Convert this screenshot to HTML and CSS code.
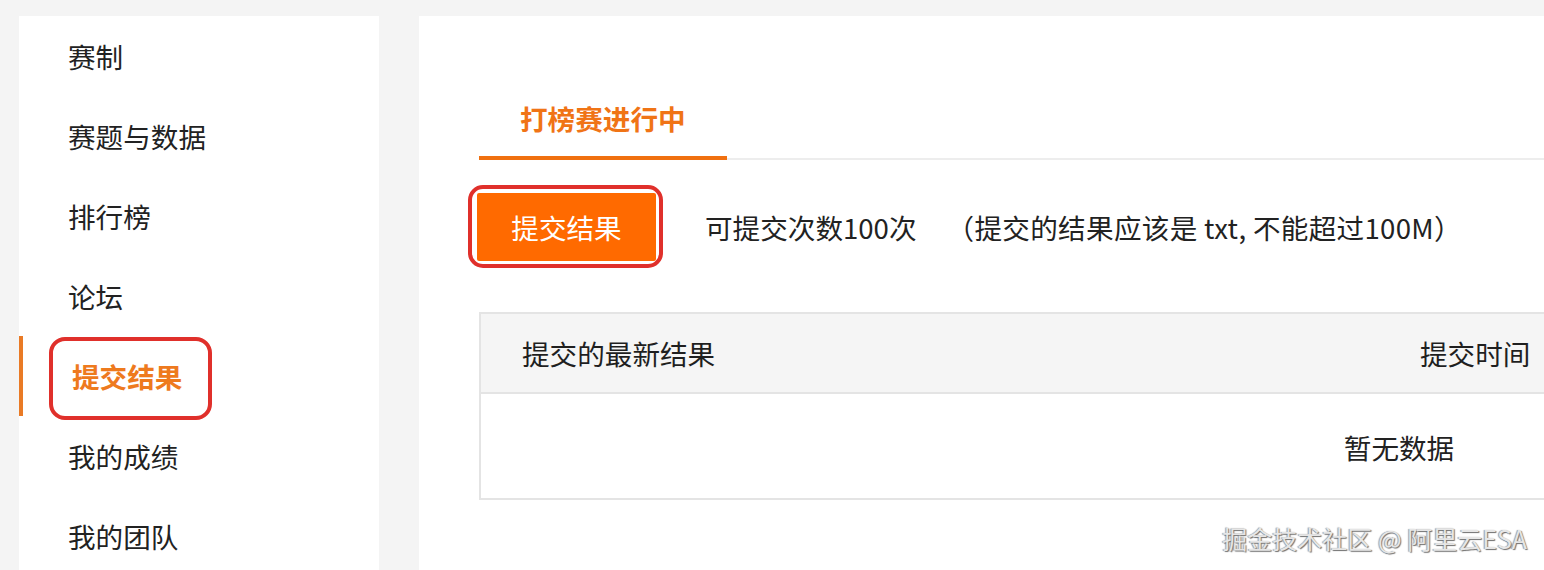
FILE: index.html
```html
<!DOCTYPE html>
<html lang="zh-CN">
<head>
<meta charset="utf-8">
<title>提交结果</title>
<link rel="stylesheet" href="styles.css">
</head>
<body>
<div class="page">
  <aside class="sidebar">
    <div class="nav-item">赛制</div>
    <div class="nav-item">赛题与数据</div>
    <div class="nav-item">排行榜</div>
    <div class="nav-item">论坛</div>
    <div class="nav-item active">提交结果<span class="mark mark-nav"></span></div>
    <div class="nav-item">我的成绩</div>
    <div class="nav-item">我的团队</div>
  </aside>
  <main class="main">
    <div class="tabs">
      <div class="tab active">打榜赛进行中</div>
    </div>
    <div class="actions">
      <div class="btn-wrap">
        <button class="btn">提交结果</button>
        <span class="mark mark-btn"></span>
      </div>
      <span class="count">可提交次数100次</span>
      <span class="hint">（提交的结果应该是 txt, 不能超过100M）</span>
    </div>
    <div class="table">
      <div class="thead">
        <div class="th th-result">提交的最新结果</div>
        <div class="th th-time">提交时间</div>
      </div>
      <div class="tbody">
        <div class="empty">暂无数据</div>
      </div>
    </div>
  </main>
</div>
<div class="watermark">掘金技术社区 @ 阿里云ESA</div>
</body>
</html>
```

FILE: styles.css
```css
* { box-sizing: border-box; }
html, body {
  margin: 0;
  height: 100%;
  overflow: hidden;
}
body {
  background: #f4f4f4;
  font-family: "Noto Sans CJK SC", "Noto Sans", sans-serif;
  color: #1f1f1f;
  position: relative;
}
.page {
  display: flex;
  gap: 40px;
  padding: 16px 0 0 19px;
  height: 100%;
}
.sidebar {
  width: 360px;
  flex: none;
  background: #fff;
}
.nav-item {
  position: relative;
  height: 80px;
  line-height: 80px;
  padding-left: 49px;
  font-size: 27.6px;
  color: #222;
}
.nav-item.active {
  color: #ee7a1e;
  font-weight: 700;
  border-left: 4px solid #e97a25;
  padding-left: 49px;
}
.mark {
  position: absolute;
  border: 4px solid #e0302b;
  pointer-events: none;
}
.mark-nav {
  left: 26px;
  top: 1px;
  width: 163px;
  height: 83px;
  border-radius: 16px;
}
.main {
  flex: 1;
  background: #fff;
  padding: 82px 0 0 60px;
  margin-right: -40px;
  overflow: hidden;
  min-width: 0;
}
.tabs {
  display: flex;
  border-bottom: 2px solid #ededed;
}
.tab {
  font-size: 27.6px;
  line-height: 40px;
  padding: 0 41px 18px 41px;
  margin-bottom: -2px;
  border-bottom: 4px solid #f07010;
  color: #f07416;
  font-weight: 700;
}
.actions {
  display: flex;
  align-items: center;
  margin-top: 33px;
  font-size: 27.6px;
}
.btn-wrap {
  position: relative;
  margin-left: -2px;
}
.btn {
  display: block;
  width: 179px;
  height: 68px;
  border: none;
  border-radius: 2px;
  background: #ff6a00;
  color: #fff;
  font-family: inherit;
  font-size: 27.6px;
  padding: 0;
}
.mark-btn {
  left: -9px;
  top: -8px;
  width: 195px;
  height: 83px;
  border-radius: 15px;
}
.count {
  margin-left: 49px;
  color: #222;
}
.hint {
  margin-left: 30px;
  color: #222;
  letter-spacing: 0.3px;
}
.table {
  margin-top: 51px;
  width: 1840px;
  border: 2px solid #e4e4e4;
}
.thead {
  display: flex;
  height: 80px;
  background: #f5f5f5;
  border-bottom: 2px solid #e4e4e4;
  align-items: center;
  font-size: 27.6px;
}
.th-result {
  width: 896px;
  padding-left: 41px;
}
.th-time {
  padding-left: 43px;
}
.tbody {
  height: 104px;
  display: flex;
  align-items: center;
  justify-content: center;
  font-size: 27.6px;
  color: #222;
}
.empty {
  padding-top: 2px;
}
.watermark {
  position: absolute;
  right: 17px;
  bottom: 16px;
  font-size: 25px;
  line-height: 32px;
  color: #e6e6e6;
  text-shadow: 1px 1px 1px #6f6f6f, -1px 0 1px #9a9a9a;
}
```
